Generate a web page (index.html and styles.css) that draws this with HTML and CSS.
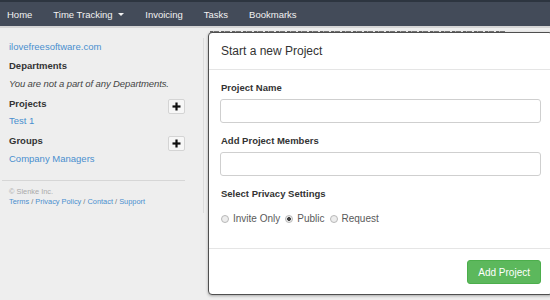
FILE: index.html
```html
<!DOCTYPE html>
<html lang="en">

<head>
    <meta charset="UTF-8">
    <meta name="viewport" content="width=device-width, initial-scale=1.0">
    <link rel="stylesheet" href="styles.css">
</head>

<body>
    <nav class="topbar">
        <a href="#">Home</a>
        <a href="#">Time Tracking <span class="caret"></span></a>
        <a href="#">Invoicing</a>
        <a href="#">Tasks</a>
        <a href="#">Bookmarks</a>
    </nav>

    <div class="page">
        <aside class="sidebar">
            <a class="link site" href="#">ilovefreesoftware.com</a>

            <div class="section">
                <h4>Departments</h4>
                <p class="note">You are not a part of any Departments.</p>
            </div>

            <div class="section">
                <div class="section-head">
                    <h4>Projects</h4>
                    <button class="add-btn" type="button">
                        <svg width="9" height="9" viewBox="0 0 9 9"><rect x="3.4" y="0.5" width="2.2" height="8" fill="#111"/><rect x="0.5" y="3.4" width="8" height="2.2" fill="#111"/></svg>
                    </button>
                </div>
                <a class="link" href="#">Test 1</a>
            </div>

            <div class="section">
                <div class="section-head">
                    <h4>Groups</h4>
                    <button class="add-btn" type="button">
                        <svg width="9" height="9" viewBox="0 0 9 9"><rect x="3.4" y="0.5" width="2.2" height="8" fill="#111"/><rect x="0.5" y="3.4" width="8" height="2.2" fill="#111"/></svg>
                    </button>
                </div>
                <a class="link" href="#">Company Managers</a>
            </div>

            <div class="sidebar-foot">
                <p class="copy">&copy; Slenke Inc.</p>
                <p class="foot-links"><a href="#">Terms</a> / <a href="#">Privacy Policy</a> / <a href="#">Contact</a> / <a href="#">Support</a></p>
            </div>
        </aside>

        <main class="content">
            <div class="lead"></div>
        </main>
    </div>

    <div class="modal">
        <div class="modal-header">Start a new Project</div>
        <form class="modal-body" action="#" method="post">
            <label class="field-label" for="pname">Project Name</label>
            <input class="field" id="pname" type="text">

            <label class="field-label" for="pmembers">Add Project Members</label>
            <input class="field" id="pmembers" type="text">

            <p class="field-label">Select Privacy Settings</p>
            <div class="radios">
                <label><input type="radio" name="privacy"> Invite Only</label>
                <label><input type="radio" name="privacy" checked> Public</label>
                <label><input type="radio" name="privacy"> Request</label>
            </div>
        </form>
        <div class="modal-footer">
            <button class="btn-green" type="button">Add Project</button>
        </div>
    </div>
</body>
</html>
```

FILE: styles.css
```css
html, body {
    margin: 0;
    height: 300px;
    overflow: hidden;
}
body {
    background-color: #eeeeee;
    font-family: "Liberation Sans", Arial, sans-serif;
    font-size: 9.5px;
    color: #333;
    position: relative;
}
a {
    text-decoration: none;
}

/* top navigation */
.topbar {
    display: flex;
    align-items: center;
    gap: 21px;
    height: 24px;
    padding-left: 7px;
    background-color: #434b59;
    border-top: 2px solid #2d3540;
    border-bottom: 2px solid #d5d5d5;
}
.topbar a {
    color: #f2f2f2;
    font-size: 9.5px;
}
.caret {
    display: inline-block;
    margin-left: 3px;
    vertical-align: middle;
    border-top: 3px solid #f2f2f2;
    border-left: 3px solid transparent;
    border-right: 3px solid transparent;
}

.page {
    display: flex;
}

/* sidebar */
.sidebar {
    box-sizing: border-box;
    width: 204px;
    margin-top: 10px;
    padding: 2px 18px 6px 2px;
    border-right: 1px solid #dcdcdc;
}
.link {
    display: block;
    color: #4a8fce;
    line-height: 14px;
    padding-left: 7px;
}
.site {
    margin-bottom: 5px;
}
.section {
    margin-bottom: 6px;
}
.section h4 {
    margin: 0 0 3.5px 0;
    padding-left: 7px;
    font-size: 9.5px;
    line-height: 14px;
    color: #333;
}
.section-head {
    display: flex;
    justify-content: space-between;
    align-items: flex-start;
}
.note {
    margin: 0;
    padding-left: 7px;
    line-height: 14px;
    font-style: italic;
    color: #444;
    letter-spacing: -0.1px;
}
.add-btn {
    display: flex;
    align-items: center;
    justify-content: center;
    width: 17px;
    height: 15px;
    margin-top: 2px;
    padding: 0;
    background-color: #f7f7f7;
    border: 1px solid #d4d4d4;
    border-radius: 2px;
}
.sidebar-foot {
    margin-top: 14px;
    border-top: 1px solid #d6d6d6;
    padding: 6px 0 0 7px;
    font-size: 7.4px;
    line-height: 10px;
}
.sidebar-foot p {
    margin: 0;
}
.copy {
    color: #aaa;
}
.foot-links {
    color: #777;
}
.foot-links a {
    color: #4a8fce;
}

/* page content behind the dialog: only a sliver of it shows */
.content {
    flex: 1;
    padding: 3px 0 0 6px;
}
.lead {
    width: 295px;
    height: 2px;
    background: repeating-linear-gradient(90deg, #666 0, #666 3px, #bbb 3px, #bbb 4px, #777 4px, #777 9px, #eee 9px, #eee 11px);
}

/* dialog */
.modal {
    position: absolute;
    left: 208px;
    top: 32px;
    width: 343px;
    background-color: #fff;
    border: 1px solid #4f4f4f;
    border-radius: 4px;
    box-shadow: 0 1px 3px rgba(0, 0, 0, 0.3);
}
.modal-header {
    padding: 11px 12px;
    font-size: 12px;
    line-height: 14px;
    color: #333;
    border-bottom: 1px solid #e5e5e5;
}
.modal-body {
    padding: 11px 11px 22px 11px;
}
.field-label {
    display: block;
    margin: 0 0 4.5px 1px;
    font-weight: bold;
    font-size: 9.5px;
    line-height: 13px;
    color: #333;
}
.field {
    display: block;
    box-sizing: border-box;
    width: 100%;
    height: 24px;
    margin-bottom: 11.5px;
    border: 1px solid #cfcfcf;
    border-radius: 3px;
}
.radios {
    display: flex;
    align-items: center;
    gap: 4px;
    margin-top: 12px;
    line-height: 14px;
    font-size: 10px;
    color: #5a5a5a;
}
.radios label {
    display: flex;
    align-items: center;
}
.radios input {
    appearance: none;
    width: 8px;
    height: 8px;
    margin: 0 4px 0 1px;
    border: 1px solid #b8b8b8;
    border-radius: 50%;
    background: #ededed;
}
.radios input:checked {
    background: radial-gradient(circle, #444 0, #444 1.6px, #ededed 2.2px);
}
.modal-footer {
    display: flex;
    justify-content: flex-end;
    padding: 11px 11px 10px 11px;
    border-top: 1px solid #e5e5e5;
}
.btn-green {
    height: 24px;
    padding: 0 10px;
    background-color: #5cb85c;
    border: 1px solid #4cae4c;
    border-radius: 3px;
    color: #fff;
    font-family: "Liberation Sans", Arial, sans-serif;
    font-size: 10px;
}
```
